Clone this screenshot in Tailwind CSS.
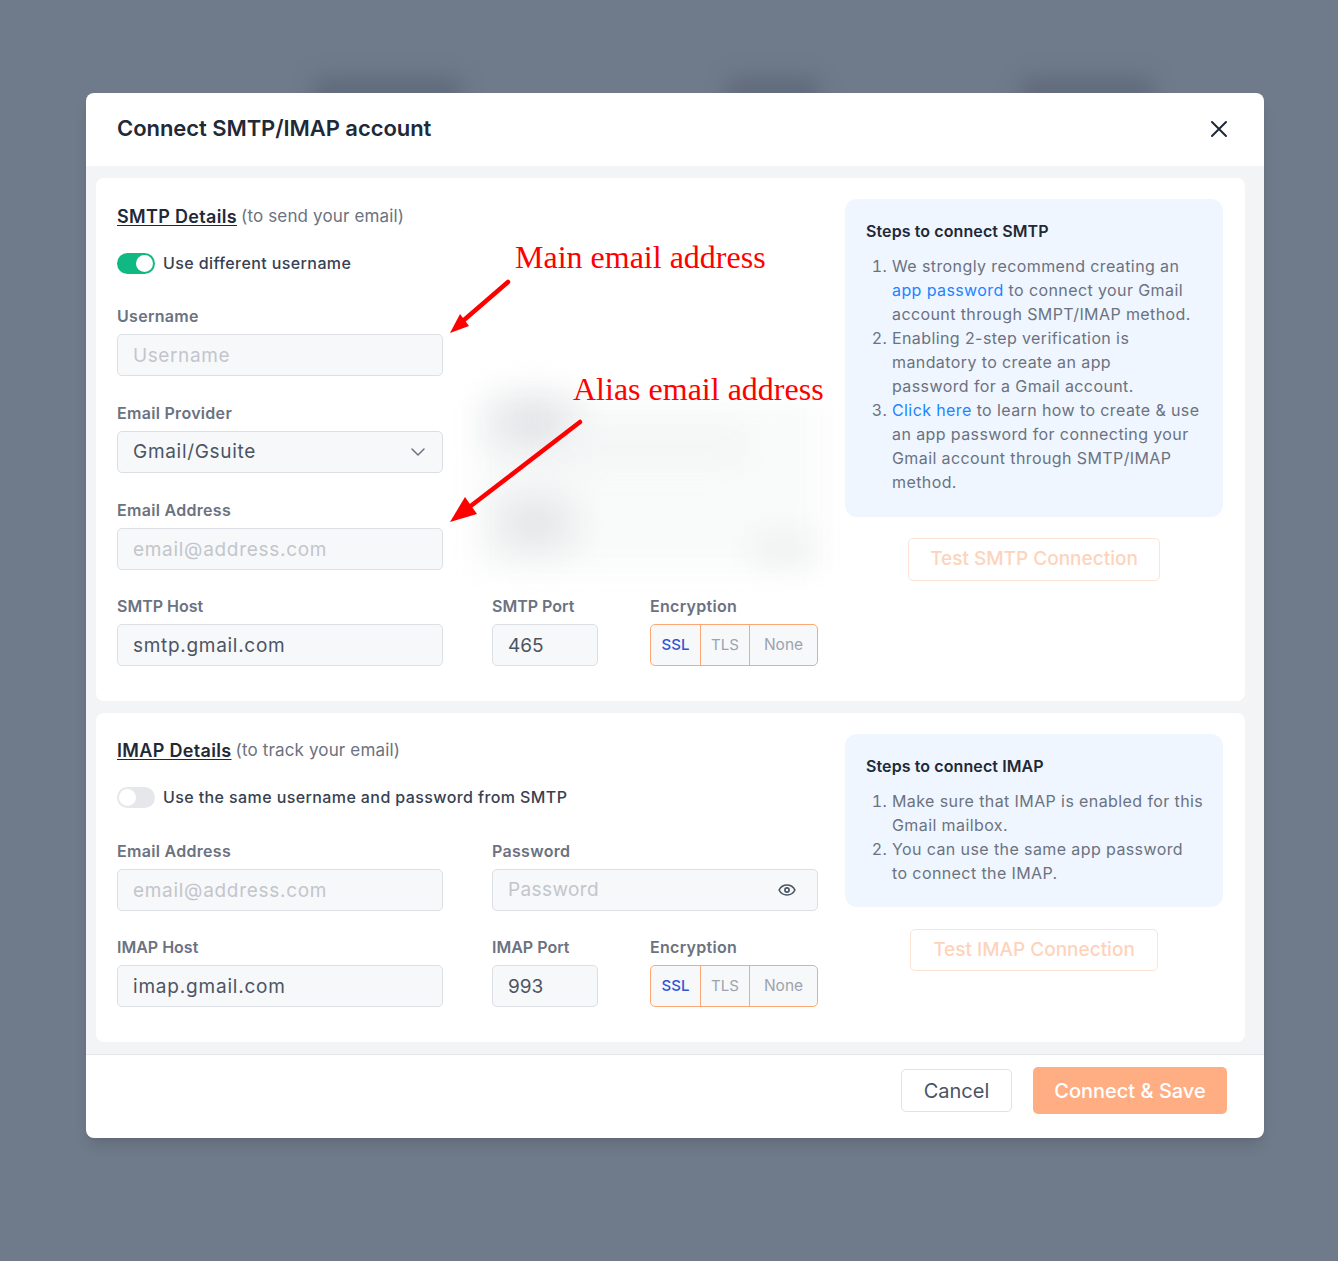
<!DOCTYPE html>
<html lang="en">
<head>
  <meta charset="UTF-8">
  <title>Connect SMTP/IMAP account</title>
  <script src="https://cdn.jsdelivr.net/npm/@tailwindcss/browser@4"></script>
</head>
<body class="relative w-[1338px] h-[1261px] overflow-hidden bg-[#6f7a8a] font-['Inter',sans-serif]">

  <!-- blurred page behind the modal -->
  <div class="absolute left-[315px] top-[78px] w-[145px] h-[24px] bg-[#5f697a] blur-[10px]"></div>
  <div class="absolute left-[728px] top-[78px] w-[90px] h-[24px] bg-[#5f697a] blur-[10px]"></div>
  <div class="absolute left-[1022px] top-[78px] w-[130px] h-[24px] bg-[#5f697a] blur-[10px]"></div>

  <!-- modal -->
  <div class="relative ml-[86px] pt-[93px] w-[1178px]">
    <div class="bg-white rounded-lg overflow-hidden shadow-lg">
      <div class="h-[73px] pb-[2px] flex items-center justify-between pl-[31px] pr-[36px]">
        <h1 class="text-[22px] font-semibold text-[#1f2937] tracking-[-0.06px]">Connect SMTP/IMAP account</h1>
        <svg class="w-[18px] h-[18px] text-[#1f2937]" viewBox="0 0 18 18" fill="none" stroke="currentColor" stroke-width="2" stroke-linecap="round"><path d="M2 2l14 14M16 2L2 16"/></svg>
      </div>

      <div class="bg-[#f3f4f6] pt-[12px] pb-[12px] pl-[10px] pr-[19px] flex flex-col gap-[12px] border-b border-[#e5e7eb]">

        <!-- SMTP -->
        <section class="bg-white rounded-lg h-[523px] pt-[24px] pl-[21px] flex gap-[27px]">
          <div class="w-[701px]">
            <div class="h-[28px] flex items-center gap-[4px]">
              <h2 class="text-[18px] font-semibold text-[#1f2937] tracking-[0.33px] underline underline-offset-2">SMTP Details</h2>
              <span class="pt-[2px] text-[17px] tracking-[0.15px] text-[#6b7280]">(to send your email)</span>
            </div>
            <div class="mt-[22px] h-[22px] flex items-center gap-[8px]">
              <div class="w-[38px] h-[21px] rounded-full bg-[#10b981] flex items-center justify-end pr-[2px]">
                <div class="w-[17px] h-[17px] rounded-full bg-white"></div>
              </div>
              <span class="text-[16px] font-medium tracking-[0.4px] text-[#374151]">Use different username</span>
            </div>
            <div class="mt-[32px] w-[326px]">
              <label class="block h-[20px] leading-[20px] mb-[8px] text-[16px] font-semibold tracking-[0.3px] text-[#6b7280]">Username</label>
              <input placeholder="Username" class="w-full h-[42px] px-[15px] rounded-[5px] bg-[#f7f8fa] border border-[#dcdfe3] text-[19px] tracking-[0.6px] text-[#4b5563] placeholder:text-[#c2c6cc]">
            </div>
            <div class="mt-[27px] w-[326px]">
              <label class="block h-[20px] leading-[20px] mb-[8px] text-[16px] font-semibold tracking-[0.3px] text-[#6b7280]">Email Provider</label>
              <div class="h-[42px] px-[15px] rounded-[5px] bg-[#f7f8fa] border border-[#dcdfe3] flex items-center justify-between">
                <span class="text-[19px] tracking-[0.7px] text-[#4b5563]">Gmail/Gsuite</span>
                <svg class="w-[18px] h-[18px] text-[#6b7280]" viewBox="0 0 24 24" fill="none" stroke="currentColor" stroke-width="2" stroke-linecap="round" stroke-linejoin="round"><path d="M4 8l8 8 8-8"/></svg>
              </div>
            </div>
            <div class="mt-[27px] w-[326px]">
              <label class="block h-[20px] leading-[20px] mb-[8px] text-[16px] font-semibold tracking-[0.3px] text-[#6b7280]">Email Address</label>
              <input placeholder="email@address.com" class="w-full h-[42px] px-[15px] rounded-[5px] bg-[#f7f8fa] border border-[#dcdfe3] text-[19px] tracking-[0.7px] text-[#4b5563] placeholder:text-[#c2c6cc]">
            </div>
            <div class="mt-[26px] flex">
              <div class="w-[326px]">
                <label class="block h-[20px] leading-[20px] mb-[8px] text-[16px] font-semibold text-[#6b7280]">SMTP Host</label>
                <input value="smtp.gmail.com" class="w-full h-[42px] px-[15px] rounded-[5px] bg-[#f7f8fa] border border-[#dcdfe3] text-[19px] tracking-[0.7px] text-[#4b5563]">
              </div>
              <div class="ml-[49px] w-[106px]">
                <label class="block h-[20px] leading-[20px] mb-[8px] text-[16px] font-semibold text-[#6b7280]">SMTP Port</label>
                <input value="465" class="w-full h-[42px] px-[15px] rounded-[5px] bg-[#f7f8fa] border border-[#dcdfe3] text-[19px] text-[#4b5563]">
              </div>
              <div class="ml-[52px] w-[168px]">
                <label class="block h-[20px] leading-[20px] mb-[8px] text-[16px] font-semibold tracking-[0.3px] text-[#6b7280]">Encryption</label>
                <div class="h-[42px] flex rounded-[5px] border-[1.5px] border-[#fca874] bg-[#f7f8fa] text-[15px] overflow-hidden">
                  <span class="w-[50px] flex items-center justify-center text-[#2f55d4] font-medium border-r-[1.5px] border-[#fca874]">SSL</span>
                  <span class="w-[49px] flex items-center justify-center text-[#9ca3af] border-r-[1.5px] border-[#fca874]">TLS</span>
                  <span class="flex-1 flex items-center justify-center text-[15.5px] text-[#9ca3af]">None</span>
                </div>
              </div>
            </div>
          </div>
          <div class="w-[378px] -mt-[3px]">
            <div class="h-[318px] rounded-xl bg-[#eff6ff] pt-[20px] px-[21px]">
              <h3 class="h-[24px] leading-[24px] text-[16px] font-semibold tracking-[0.1px] text-[#1f2937]">Steps to connect SMTP</h3>
              <ol class="mt-[11px] pl-[26px] list-decimal text-[16px] leading-[24px] tracking-[0.4px] text-[#6b7280] whitespace-nowrap">
                <li>We strongly recommend creating an<br><span class="text-[#1d84ff]">app password</span> to connect your Gmail<br>account through SMPT/IMAP method.</li>
                <li>Enabling 2-step verification is<br>mandatory to create an app<br>password for a Gmail account.</li>
                <li><span class="text-[#1d84ff]">Click here</span> to learn how to create &amp; use<br>an app password for connecting your<br>Gmail account through SMTP/IMAP<br>method.</li>
              </ol>
            </div>
            <div class="mt-[21px] flex justify-center">
              <button class="w-[252px] h-[43px] rounded-[5px] border border-[#fde3d5] text-[19px] font-medium text-[#fdd3bc]">Test SMTP Connection</button>
            </div>
          </div>
        </section>

        <!-- IMAP -->
        <section class="bg-white rounded-lg h-[329px] pt-[23px] pl-[21px] flex gap-[27px]">
          <div class="w-[701px]">
            <div class="h-[28px] flex items-center gap-[4px]">
              <h2 class="text-[18px] font-semibold text-[#1f2937] tracking-[0.33px] underline underline-offset-2">IMAP Details</h2>
              <span class="pt-[2px] text-[17px] tracking-[0.15px] text-[#6b7280]">(to track your email)</span>
            </div>
            <div class="mt-[22px] h-[22px] flex items-center gap-[8px]">
              <div class="w-[38px] h-[21px] rounded-full bg-[#e5e7eb] flex items-center pl-[2px]">
                <div class="w-[17px] h-[17px] rounded-full bg-white"></div>
              </div>
              <span class="text-[16px] font-medium tracking-[0.4px] text-[#374151]">Use the same username and password from SMTP</span>
            </div>
            <div class="mt-[33px] flex">
              <div class="w-[326px]">
                <label class="block h-[20px] leading-[20px] mb-[8px] text-[16px] font-semibold tracking-[0.3px] text-[#6b7280]">Email Address</label>
                <input placeholder="email@address.com" class="w-full h-[42px] px-[15px] rounded-[5px] bg-[#f7f8fa] border border-[#dcdfe3] text-[19px] tracking-[0.7px] text-[#4b5563] placeholder:text-[#c2c6cc]">
              </div>
              <div class="ml-[49px] w-[326px]">
                <label class="block h-[20px] leading-[20px] mb-[8px] text-[16px] font-semibold tracking-[0.3px] text-[#6b7280]">Password</label>
                <div class="h-[42px] px-[15px] rounded-[5px] bg-[#f7f8fa] border border-[#dcdfe3] flex items-center justify-between">
                  <span class="text-[19px] tracking-[0.4px] text-[#c2c6cc]">Password</span>
                  <svg class="w-[20px] h-[20px] mr-[5px] text-[#4b5563]" viewBox="0 0 24 24" fill="none" stroke="currentColor" stroke-width="2" stroke-linecap="round" stroke-linejoin="round"><path d="M2.5 12C4.5 8 8 6 12 6s7.500 2 9.500 6c-2 4-5.500 6-9.500 6s-7.500-2-9.500-6z"/><circle cx="12" cy="12" r="2.500"/></svg>
                </div>
              </div>
            </div>
            <div class="mt-[26px] flex">
              <div class="w-[326px]">
                <label class="block h-[20px] leading-[20px] mb-[8px] text-[16px] font-semibold text-[#6b7280]">IMAP Host</label>
                <input value="imap.gmail.com" class="w-full h-[42px] px-[15px] rounded-[5px] bg-[#f7f8fa] border border-[#dcdfe3] text-[19px] tracking-[0.8px] text-[#4b5563]">
              </div>
              <div class="ml-[49px] w-[106px]">
                <label class="block h-[20px] leading-[20px] mb-[8px] text-[16px] font-semibold text-[#6b7280]">IMAP Port</label>
                <input value="993" class="w-full h-[42px] px-[15px] rounded-[5px] bg-[#f7f8fa] border border-[#dcdfe3] text-[19px] text-[#4b5563]">
              </div>
              <div class="ml-[52px] w-[168px]">
                <label class="block h-[20px] leading-[20px] mb-[8px] text-[16px] font-semibold tracking-[0.3px] text-[#6b7280]">Encryption</label>
                <div class="h-[42px] flex rounded-[5px] border-[1.5px] border-[#fca874] bg-[#f7f8fa] text-[15px] overflow-hidden">
                  <span class="w-[50px] flex items-center justify-center text-[#2f55d4] font-medium border-r-[1.5px] border-[#fca874]">SSL</span>
                  <span class="w-[49px] flex items-center justify-center text-[#9ca3af] border-r-[1.5px] border-[#fca874]">TLS</span>
                  <span class="flex-1 flex items-center justify-center text-[15.5px] text-[#9ca3af]">None</span>
                </div>
              </div>
            </div>
          </div>
          <div class="w-[378px] -mt-[2px]">
            <div class="h-[173px] rounded-xl bg-[#eff6ff] pt-[20px] px-[21px]">
              <h3 class="h-[24px] leading-[24px] text-[16px] font-semibold tracking-[0.1px] text-[#1f2937]">Steps to connect IMAP</h3>
              <ol class="mt-[11px] pl-[26px] list-decimal text-[16px] leading-[24px] tracking-[0.4px] text-[#6b7280] whitespace-nowrap">
                <li>Make sure that IMAP is enabled for this<br>Gmail mailbox.</li>
                <li>You can use the same app password<br>to connect the IMAP.</li>
              </ol>
            </div>
            <div class="mt-[22px] flex justify-center">
              <button class="w-[248px] h-[42px] rounded-[5px] border border-[#fde3d5] text-[19px] font-medium text-[#fdd3bc]">Test IMAP Connection</button>
            </div>
          </div>
        </section>
      </div>

      <div class="h-[83px] pb-[12px] flex items-center justify-end gap-[21px] pr-[37px]">
        <button class="w-[111px] h-[43px] rounded-[5px] border border-[#dfe2e6] bg-white text-[20px] text-[#4b5563]">Cancel</button>
        <button class="w-[194px] h-[47px] rounded-[5px] bg-[#ffae84] text-[20px] font-medium text-white">Connect &amp; Save</button>
      </div>
    </div>
  </div>

  <!-- blurred content sitting on the SMTP card -->
  <div class="absolute left-[465px] top-[390px] w-[365px] h-[190px] pointer-events-none">
    <div class="absolute left-[10px] top-[10px] w-[345px] h-[170px] bg-[#f9fafa] blur-[14px]"></div>
    <div class="absolute left-[30px] top-[10px] w-[75px] h-[45px] bg-[#dfe1e4] blur-[20px]"></div>
    <div class="absolute left-[100px] top-[45px] w-[180px] h-[25px] bg-[#f2f3f4] blur-[16px]"></div>
    <div class="absolute left-[35px] top-[110px] w-[70px] h-[45px] bg-[#e0e2e4] blur-[20px]"></div>
    <div class="absolute left-[290px] top-[145px] w-[55px] h-[28px] bg-[#eff0f1] blur-[14px]"></div>
  </div>

  <!-- red annotations on top of the screenshot -->
  <span class="absolute left-[515px] top-[239px] font-['Liberation_Serif',serif] text-[32px] leading-[36px] text-[#ff0000]">Main email address</span>
  <span class="absolute left-[573px] top-[371px] font-['Liberation_Serif',serif] text-[32px] leading-[36px] text-[#ff0000]">Alias email address</span>
  <svg class="absolute left-0 top-0 pointer-events-none" width="1338" height="1261" fill="none">
    <path d="M508 282L464 320" stroke="#ff0000" stroke-width="4.500" stroke-linecap="round"/>
    <path d="M450 333L460 314 469 326z" fill="#ff0000"/>
    <path d="M580 422L472 505" stroke="#ff0000" stroke-width="4.500" stroke-linecap="round"/>
    <path d="M450 522L465 497 477 514z" fill="#ff0000"/>
  </svg>
</body>
</html>
